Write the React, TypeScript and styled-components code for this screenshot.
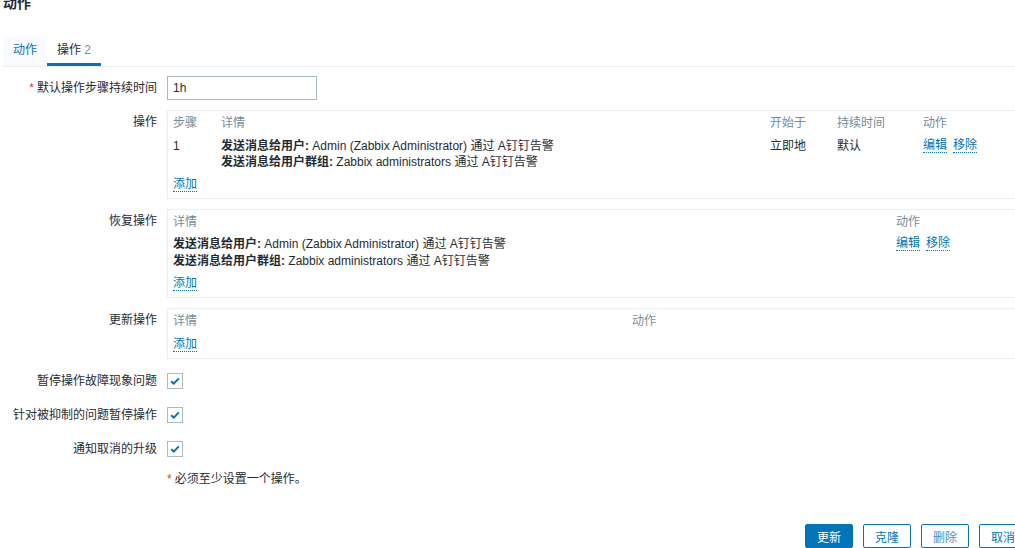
import React from 'react';
import styled, { createGlobalStyle } from 'styled-components';

const GlobalStyle = createGlobalStyle`
  html, body {
    margin: 0;
    padding: 0;
    background: #ffffff;
    overflow: hidden;
  }
  body {
    font-family: "Liberation Sans", Arial, "Noto Sans CJK SC", sans-serif;
    font-size: 12px;
    color: #1f2c33;
  }
`;

const Dialog = styled.div`
  width: 1037px;
  position: relative;
`;

const Head = styled.div`
  display: flow-root;
  height: 36px;
  position: relative;
`;

const Title = styled.h4`
  margin: -5px 0 0 3px;
  font-size: 14px;
  line-height: 16px;
  font-weight: bold;
`;

const Close = styled.span`
  position: absolute;
  right: 34px;
  top: -11px;
  font-size: 14px;
  color: #a0acb3;
`;

const TabList = styled.div`
  display: flex;
  margin-left: 3px;
  margin-right: 10px;
  border-bottom: 1px solid #ebeef0;
`;

const Tab = styled.div<{ $active?: boolean }>`
  padding: 7px 10px 6px;
  line-height: 14px;
  border-bottom: 3px solid ${({ $active }) => ($active ? '#0275b8' : 'transparent')};
  color: ${({ $active }) => ($active ? '#1f2c33' : '#0275b8')};
  background: ${({ $active }) => ($active ? 'transparent' : '#fafbfc')};
`;

const Count = styled.span`
  color: #768d99;
`;

const Form = styled.div`
  display: flex;
  flex-direction: column;
  gap: 10px;
  margin-top: 9px;
  padding-right: 10px;
`;

const Row = styled.div<{ $center?: boolean }>`
  display: grid;
  grid-template-columns: 157px 1fr;
  column-gap: 10px;
  align-items: ${({ $center }) => ($center ? 'center' : 'start')};
  min-height: ${({ $center }) => ($center ? '24px' : '0')};
`;

const Label = styled.div<{ $top?: boolean }>`
  text-align: right;
  line-height: 14px;
  padding-top: ${({ $top }) => ($top ? '5px' : '0')};
  white-space: nowrap;
`;

const Star = styled.span`
  color: #e33734;
  margin-right: 3px;
`;

const TextInput = styled.input`
  box-sizing: border-box;
  width: 150px;
  height: 24px;
  border: 1px solid #acbbc2;
  padding: 0 5px;
  font: inherit;
  color: #1f2c33;
  outline: none;
`;

const Box = styled.div`
  border: 1px solid #ebeef0;
  padding: 5px 5px 6px;
  display: flex;
  flex-direction: column;
`;

const Grid = styled.div<{ $cols: string; $gap?: number; $line?: number }>`
  display: grid;
  grid-template-columns: ${({ $cols }) => $cols};
  margin-top: ${({ $gap }) => $gap ?? 0}px;
  line-height: ${({ $line }) => $line ?? 14}px;
`;

const Th = styled.div`
  color: #768d99;
  white-space: nowrap;
`;

const Td = styled.div`
  white-space: nowrap;
`;

const Strong = styled.b`
  font-weight: bold;
`;

const Links = styled.div`
  display: flex;
  gap: 6px;
  align-items: flex-start;
`;

const Link = styled.a`
  color: #0275b8;
  text-decoration: none;
  border-bottom: 1px dotted #0275b8;
  line-height: 14px;
  cursor: pointer;
`;

const AddWrap = styled.div<{ $gap: number }>`
  margin-top: ${({ $gap }) => $gap}px;
  line-height: 14px;
  display: flex;
`;

const Check = styled.span`
  box-sizing: border-box;
  width: 16px;
  height: 16px;
  border: 1px solid #acbbc2;
  display: flex;
  align-items: center;
  justify-content: center;
  background: #ffffff;
`;

const Note = styled.div`
  line-height: 16px;
`;

const Footer = styled.div`
  display: flex;
  justify-content: flex-end;
  gap: 10px;
  margin-top: 37px;
  padding-right: 10px;
`;

const Button = styled.button<{ $primary?: boolean; $muted?: boolean }>`
  box-sizing: border-box;
  width: 48px;
  height: 24px;
  border-radius: 2px;
  border: 1px solid #0275b8;
  background: ${({ $primary }) => ($primary ? '#0275b8' : '#ffffff')};
  color: ${({ $primary, $muted }) => ($primary ? '#ffffff' : $muted ? '#4a8fc6' : '#0275b8')};
  font: inherit;
  padding: 0;
`;

const Tick = () => (
  <Check>
    <svg width="12" height="12" viewBox="0 0 12 12">
      <path d="M2.2 6.2 L4.8 8.6 L9.8 3.4" fill="none" stroke="#0275b8" strokeWidth="2" />
    </svg>
  </Check>
);

const Ops = () => (
  <>
    <div>
      <Strong>发送消息给用户:</Strong> Admin (Zabbix Administrator) 通过 A钉钉告警
    </div>
    <div>
      <Strong>发送消息给用户群组:</Strong> Zabbix administrators 通过 A钉钉告警
    </div>
  </>
);

const App = () => (
  <Dialog>
    <GlobalStyle />
    <Head>
      <Title>动作</Title>
      <Close>×</Close>
    </Head>
    <TabList>
      <Tab>动作</Tab>
      <Tab $active>
        操作 <Count>2</Count>
      </Tab>
    </TabList>
    <Form>
      <Row $center>
        <Label>
          <Star>*</Star>默认操作步骤持续时间
        </Label>
        <TextInput defaultValue="1h" />
      </Row>

      <Row>
        <Label $top>操作</Label>
        <Box>
          <Grid $cols="48px 549px 67px 86px 1fr">
            <Th>步骤</Th>
            <Th>详情</Th>
            <Th>开始于</Th>
            <Th>持续时间</Th>
            <Th>动作</Th>
          </Grid>
          <Grid $cols="48px 549px 67px 86px 1fr" $gap={8} $line={16}>
            <Td>1</Td>
            <Td>
              <Ops />
            </Td>
            <Td>立即地</Td>
            <Td>默认</Td>
            <Links>
              <Link>编辑</Link>
              <Link>移除</Link>
            </Links>
          </Grid>
          <AddWrap $gap={7}>
            <Link>添加</Link>
          </AddWrap>
        </Box>
      </Row>

      <Row>
        <Label $top>恢复操作</Label>
        <Box>
          <Grid $cols="723px 1fr">
            <Th>详情</Th>
            <Th>动作</Th>
          </Grid>
          <Grid $cols="723px 1fr" $gap={7} $line={17}>
            <Td>
              <Ops />
            </Td>
            <Links>
              <Link>编辑</Link>
              <Link>移除</Link>
            </Links>
          </Grid>
          <AddWrap $gap={6}>
            <Link>添加</Link>
          </AddWrap>
        </Box>
      </Row>

      <Row>
        <Label $top>更新操作</Label>
        <Box>
          <Grid $cols="459px 1fr">
            <Th>详情</Th>
            <Th>动作</Th>
          </Grid>
          <AddWrap $gap={9}>
            <Link>添加</Link>
          </AddWrap>
        </Box>
      </Row>

      <Row $center>
        <Label>暂停操作故障现象问题</Label>
        <Tick />
      </Row>
      <Row $center>
        <Label>针对被抑制的问题暂停操作</Label>
        <Tick />
      </Row>
      <Row $center>
        <Label>通知取消的升级</Label>
        <Tick />
      </Row>
      <Row>
        <div />
        <Note>
          <Star>*</Star>必须至少设置一个操作。
        </Note>
      </Row>
    </Form>
    <Footer>
      <Button $primary>更新</Button>
      <Button>克隆</Button>
      <Button $muted>删除</Button>
      <Button>取消</Button>
    </Footer>
  </Dialog>
);

export default App;
